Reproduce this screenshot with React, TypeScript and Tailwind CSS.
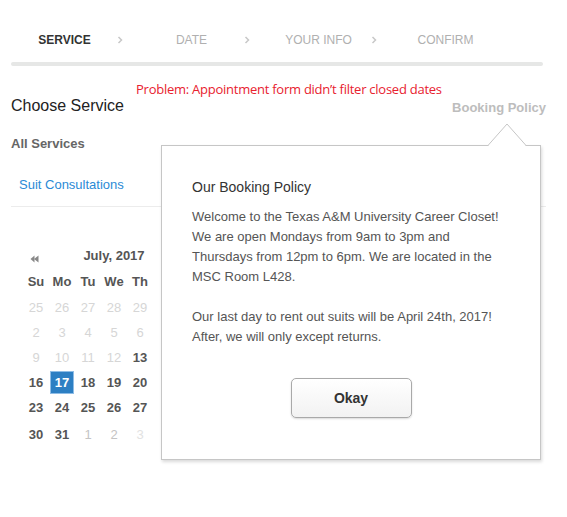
import React from "react";

const steps = [
  { label: "SERVICE", active: true, chevron: true },
  { label: "DATE", active: false, chevron: true },
  { label: "YOUR INFO", active: false, chevron: true },
  { label: "CONFIRM", active: false, chevron: false },
];

type Cell = { d: number; c: "off" | "on" | "sel" | "faint" | "mid" };
const rows: Cell[][] = [
  [25, 26, 27, 28, 29].map((d) => ({ d, c: "off" as const })),
  [2, 3, 4, 5, 6].map((d) => ({ d, c: "off" as const })),
  [
    { d: 9, c: "off" },
    { d: 10, c: "off" },
    { d: 11, c: "off" },
    { d: 12, c: "off" },
    { d: 13, c: "on" },
  ],
  [
    { d: 16, c: "on" },
    { d: 17, c: "sel" },
    { d: 18, c: "on" },
    { d: 19, c: "on" },
    { d: 20, c: "on" },
  ],
  [23, 24, 25, 26, 27].map((d) => ({ d, c: "on" as const })),
  [
    { d: 30, c: "on" },
    { d: 31, c: "on" },
    { d: 1, c: "mid" },
    { d: 2, c: "mid" },
    { d: 3, c: "faint" },
  ],
];

function Chevron() {
  return (
    <svg width="6" height="8" viewBox="0 0 6 8" className="block">
      <path d="M1.5 1 L4.5 4 L1.5 7" fill="none" stroke="#c8c8c8" strokeWidth="1.5" />
    </svg>
  );
}

function DayCell({ cell }: { cell: Cell }) {
  if (cell.c === "sel") {
    return (
      <div className="h-[25px] w-[26px] flex items-center justify-center">
        <div className="w-[24px] h-[23px] bg-[#2d7fc3] border border-[#8fbde6] text-white font-bold flex items-center justify-center">
          {cell.d}
        </div>
      </div>
    );
  }
  const cls =
    cell.c === "on"
      ? "text-[#555] font-bold"
      : cell.c === "mid"
      ? "text-[#c4c4c4]"
      : cell.c === "faint"
      ? "text-[#e2e2e2]"
      : "text-[#d6d6d6]";
  return (
    <div className={`h-[25px] w-[26px] flex items-center justify-center ${cls}`}>{cell.d}</div>
  );
}

export default function App() {
  return (
    <div className="w-[567px] h-[517px] bg-white relative overflow-hidden font-['Liberation_Sans',Arial,sans-serif] text-[13px]">
      <div className="pl-[11px] pr-[21px] pt-[32px]">
        {/* steps */}
        <div className="flex ml-[-10px]">
          {steps.map((s) => (
            <div key={s.label} className="w-[127px] h-[16px] relative flex items-center justify-center">
              <span
                className={`text-[12px] leading-[16px] ${
                  s.active ? "font-bold text-[#333]" : "text-[#b0b0b0]"
                }`}
              >
                {s.label}
              </span>
              {s.chevron && (
                <span className="absolute right-[5px] top-[4px]">
                  <Chevron />
                </span>
              )}
            </div>
          ))}
        </div>
        <div className="mt-[14px] h-[4px] w-[532px] bg-[#e6e7e6] rounded-full" />

        <div className="mt-[15px] pl-[125px] leading-[16px] text-[13px] text-[#e8212f] font-['Open_Sans',sans-serif] tracking-[-0.25px]">
          Problem: Appointment form didn’t filter closed dates
        </div>

        <div className="flex justify-between items-start">
          <div className="text-[16px] leading-[18px] text-[#222]">Choose Service</div>
          <div className="mt-[3px] text-[13px] leading-[16px] font-bold text-[#bdbdbd]">Booking Policy</div>
        </div>

        <div className="mt-[20px] leading-[16px] font-bold text-[#666]">All Services</div>
        <div className="mt-[25px] pl-[8px] leading-[16px] text-[#2b8ad6]">Suit Consultations</div>
        <div className="mt-[13px] h-px bg-[#ececec]" />

        {/* calendar */}
        <div className="mt-[42px] ml-[12px] w-[182px]">
          <div className="h-[20px] relative flex items-center justify-center">
            <span className="absolute left-[7px] top-[6px]">
              <svg width="9" height="8" viewBox="0 0 9 8" className="block">
                <path d="M0.5 4 L4.5 0.5 L4.5 7.5 Z" fill="#888" />
                <path d="M4 4 L8.5 0.5 L8.5 7.5 Z" fill="#888" />
              </svg>
            </span>
            <span className="font-bold text-[#555] mt-[-6px]">July, 2017</span>
          </div>
          <div className="flex h-[26px] items-center font-bold text-[#555]">
            {["Su", "Mo", "Tu", "We", "Th"].map((d) => (
              <div key={d} className="w-[26px] text-center">
                {d}
              </div>
            ))}
          </div>
          {rows.map((r, i) => (
            <div key={i} className={`flex ${i === 5 ? "mt-[2px]" : ""}`}>
              {r.map((c, j) => (
                <DayCell key={j} cell={c} />
              ))}
            </div>
          ))}
        </div>
      </div>

      {/* popover */}
      <div className="absolute left-[161px] top-[145px] w-[380px] h-[315px] bg-white border border-[#c6c6c6] shadow-[1px_2px_3px_rgba(0,0,0,0.15)] pt-[31px] pl-[30px] pr-[20px]">
        <svg
          width="40"
          height="24"
          viewBox="0 0 40 24"
          className="absolute left-[325px] top-[-23px] block"
        >
          <path d="M0.5 23.5 L20 1 L39.5 23.5 Z" fill="#fff" />
          <path d="M0.5 23 L20 1 L39.5 23" fill="none" stroke="#c6c6c6" strokeWidth="1" />
        </svg>
        <div className="text-[14px] leading-[20px] text-[#333]">Our Booking Policy</div>
        <div className="mt-[10px] leading-[20px] text-[#555]">
          <p>
            Welcome to the Texas A&amp;M University Career Closet!
            <br />
            We are open Mondays from 9am to 3pm and
            <br />
            Thursdays from 12pm to 6pm. We are located in the
            <br />
            MSC Room L428.
          </p>
          <p className="mt-[20px]">
            Our last day to rent out suits will be April 24th, 2017!
            <br />
            After, we will only except returns.
          </p>
        </div>
        <div className="mt-[31px] flex justify-center pr-[10px]">
          <button className="w-[121px] h-[40px] rounded-[5px] border border-[#a9a9a9] bg-gradient-to-b from-white to-[#f2f2f2] shadow-[0_1px_2px_rgba(0,0,0,0.15)] font-bold text-[14px] text-[#333]">
            Okay
          </button>
        </div>
      </div>
    </div>
  );
}
